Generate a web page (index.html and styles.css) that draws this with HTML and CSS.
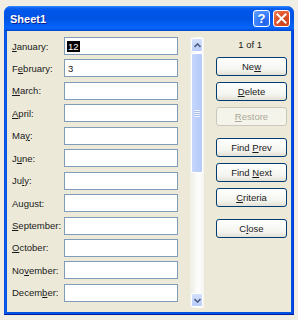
FILE: index.html
```html
<!DOCTYPE html>
<html lang="en">
<head>
    <meta charset="UTF-8">
    <title>Sheet1</title>
    <link rel="stylesheet" href="styles.css">
</head>
<body>
    <div class="window">
        <div class="titlebar">
            <span class="title">Sheet1</span>
            <div class="caption-buttons">
                <span class="cap-btn help">?</span>
                <span class="cap-btn close">
                    <svg width="11" height="11" viewBox="0 0 11 11">
                        <path d="M1.5 1.5 L9.5 9.5 M9.5 1.5 L1.5 9.5" stroke="#fff" stroke-width="2" stroke-linecap="square"/>
                    </svg>
                </span>
            </div>
        </div>

        <div class="client">
            <div class="fields">
                <span class="field-label"><u>J</u>anuary:</span>
                <div class="field"><span class="selected">12</span></div>
                <span class="field-label">F<u>e</u>bruary:</span>
                <div class="field">3</div>
                <span class="field-label"><u>M</u>arch:</span>
                <div class="field"></div>
                <span class="field-label"><u>A</u>pril:</span>
                <div class="field"></div>
                <span class="field-label">Ma<u>y</u>:</span>
                <div class="field"></div>
                <span class="field-label">J<u>u</u>ne:</span>
                <div class="field"></div>
                <span class="field-label">Ju<u>l</u>y:</span>
                <div class="field"></div>
                <span class="field-label">Au<u>g</u>ust:</span>
                <div class="field"></div>
                <span class="field-label"><u>S</u>eptember:</span>
                <div class="field"></div>
                <span class="field-label"><u>O</u>ctober:</span>
                <div class="field"></div>
                <span class="field-label">No<u>v</u>ember:</span>
                <div class="field"></div>
                <span class="field-label">Decem<u>b</u>er:</span>
                <div class="field"></div>
            </div>

            <div class="scrollbar">
                <div class="scroll-btn">
                    <svg width="7" height="5" viewBox="0 0 7 5"><path d="M0.5 4 L3.5 1 L6.5 4" fill="none" stroke="#4d6185" stroke-width="1.6"/></svg>
                </div>
                <div class="scroll-track">
                    <div class="scroll-thumb"><span class="grip"></span></div>
                </div>
                <div class="scroll-btn">
                    <svg width="7" height="5" viewBox="0 0 7 5"><path d="M0.5 1 L3.5 4 L6.5 1" fill="none" stroke="#4d6185" stroke-width="1.6"/></svg>
                </div>
            </div>

            <div class="actions">
                <div class="record-count">1 of 1</div>
                <button class="btn"><span>Ne<u>w</u></span></button>
                <button class="btn"><span><u>D</u>elete</span></button>
                <button class="btn disabled group-end"><span><u>R</u>estore</span></button>
                <button class="btn"><span>Find <u>P</u>rev</span></button>
                <button class="btn"><span>Find <u>N</u>ext</span></button>
                <button class="btn group-end"><span><u>C</u>riteria</span></button>
                <button class="btn"><span>C<u>l</u>ose</span></button>
            </div>
        </div>
    </div>
</body>
</html>
```

FILE: styles.css
```css
* {
    margin: 0;
    padding: 0;
    box-sizing: border-box;
}

body {
    background: #efede4;
    font-family: "Liberation Sans", Arial, sans-serif;
}

.window {
    margin: 6px 0 0 4px;
    width: 290px;
    height: 309px;
    display: flex;
    flex-direction: column;
    background: linear-gradient(90deg, #0831d9 0, #166aee 1px, #0054e3 2px, #0054e3 calc(100% - 2px), #0831d9 100%);
    border-radius: 7px 7px 0 0;
    border-bottom: 1px solid #001ea0;
}

.titlebar {
    height: 25px;
    flex-shrink: 0;
    display: flex;
    align-items: center;
    justify-content: space-between;
    padding: 0 4px 0 6px;
    border-radius: 7px 7px 0 0;
    background: linear-gradient(#3b8cff 0, #0a62f0 2px, #0055ea 5px, #0054e3 50%, #0461f5 80%, #0a66ff 88%, #0053e0 96%, #0043c8 100%);
}

.title {
    color: #fff;
    font-weight: bold;
    font-size: 11px;
    text-shadow: 1px 1px 0 #0a1e8c;
}

.caption-buttons {
    display: flex;
    gap: 3px;
}

.cap-btn {
    width: 17px;
    height: 17px;
    border: 1px solid #fff;
    border-radius: 3px;
    display: flex;
    align-items: center;
    justify-content: center;
    color: #fff;
    font-weight: bold;
    font-size: 13px;
}

.help {
    background: radial-gradient(circle at 70% 75%, #1f5ee8, #3f86ff 60%, #6aa4ff);
}

.close {
    background: radial-gradient(circle at 70% 75%, #c8401b, #e4582e 60%, #f08a64);
}

.client {
    flex: 1;
    margin: 0 3px 2px 3px;
    background: #ece9d8;
    display: flex;
    align-items: flex-start;
    padding: 6px 4px 0 5px;
    color: #1a1a1a;
}

.fields {
    display: grid;
    grid-template-columns: 52px 114px;
    grid-auto-rows: 18px;
    row-gap: 4.45px;
    align-items: center;
}

.field-label {
    font-size: 9.5px;
}

.field {
    height: 18px;
    background: #fff;
    border: 1px solid #7f9db9;
    padding-left: 3px;
    display: flex;
    align-items: center;
    font-size: 9.5px;
}

.selected {
    background: #000;
    color: #fff;
    padding: 0 1px;
    margin-left: -1px;
}

.scrollbar {
    margin-left: 12px;
    width: 14px;
    height: 271px;
    display: flex;
    flex-direction: column;
    background: linear-gradient(90deg, #eeede5, #fefefe 60%, #f4f3ee);
}

.scroll-btn {
    height: 14px;
    flex-shrink: 0;
    margin: 1px;
    border: 1px solid #fff;
    border-radius: 2px;
    background: linear-gradient(#d4e0fc, #b9cdfa);
    display: flex;
    align-items: center;
    justify-content: center;
}

.scroll-track {
    flex: 1;
}

.scroll-thumb {
    height: 120px;
    margin: 0 1px;
    border: 1px solid #fff;
    border-radius: 2px;
    background: linear-gradient(90deg, #c6d6fc, #bcd0fb 50%, #b6cafa);
    display: flex;
    align-items: center;
    justify-content: center;
}

.grip {
    width: 6px;
    height: 7px;
    background: repeating-linear-gradient(#eef3fe 0, #eef3fe 1px, #a9bff0 1px, #a9bff0 2px);
}

.actions {
    margin-left: 12px;
    width: 71px;
    display: flex;
    flex-direction: column;
    gap: 6px;
}

.record-count {
    height: 13px;
    font-size: 9.5px;
    text-align: right;
    padding-right: 25px;
    line-height: 13px;
    margin-top: 1px;
}

.btn {
    height: 19px;
    border: 1px solid #003c74;
    border-radius: 3px;
    background: linear-gradient(#fff, #f4f4ef 70%, #e3e0d4);
    font-family: inherit;
    font-size: 9.5px;
    color: #1a1a1a;
    display: flex;
    align-items: center;
    justify-content: center;
}

.btn.disabled {
    border-color: #cac8bb;
    background: #f5f4ea;
    color: #aca899;
}

.btn.group-end {
    margin-bottom: 6px;
}
```
